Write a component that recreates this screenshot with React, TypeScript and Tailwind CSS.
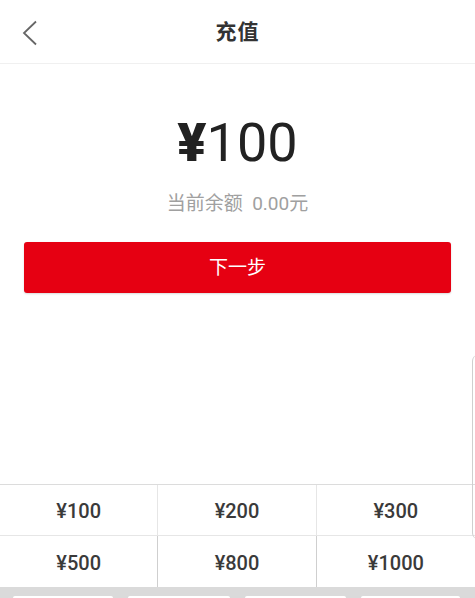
import React from 'react';

const amounts = ['¥100', '¥200', '¥300', '¥500', '¥800', '¥1000'];

export default function App() {
  return (
    <div
      className="relative w-[475px] h-[598px] bg-white overflow-hidden flex flex-col"
      style={{ fontFamily: '"Roboto", "Noto Sans CJK SC", sans-serif' }}
    >
      {/* header */}
      <div className="h-[64px] flex items-center justify-center relative border-b border-[#f0f0f0]">
        <svg
          className="absolute left-[22px] top-[20px]"
          width="16"
          height="26"
          viewBox="0 0 16 26"
          fill="none"
        >
          <path d="M14 1.5L2 13l12 11.5" stroke="#666" strokeWidth="1.8" />
        </svg>
        <span className="text-[21px] font-bold text-[#333] tracking-[1px] mt-[3px]">充值</span>
      </div>

      {/* amount */}
      <div className="flex flex-col items-center mt-[52px]">
        <div className="flex items-baseline leading-none text-[#222]">
          <span className="text-[54px] font-black">¥</span>
          <span className="text-[54px] font-normal">100</span>
        </div>
        <div className="mt-[20px] text-[19px] text-[#a0a0a0]">
          当前余额&nbsp;&nbsp;0.00元
        </div>
      </div>

      <button className="mx-[24px] mt-[23px] h-[51px] bg-[#e60012] rounded-[3px] text-white text-[19px] pt-[2px] shadow-[0_1px_2px_rgba(0,0,0,0.15)]">
        下一步
      </button>

      <div className="flex-1" />

      {/* preset amounts */}
      <div className="grid grid-cols-3 border-t border-[#dcdcdc]">
        {amounts.map((a, i) => (
          <div
            key={a}
            className={
              'h-[51px] flex items-center justify-center text-[20px] font-medium text-[#3a3a3a] pt-[2px] ' +
              (i % 3 !== 2 ? 'border-r border-[#cfcfcf] ' : '') +
              (i < 3 ? 'border-b border-[#e6e6e6]' : '')
            }
          >
            {a}
          </div>
        ))}
      </div>

      {/* keyboard edge */}
      <div className="h-[11px] bg-[#dadada] flex gap-[15px] px-[13px] pt-[9px]">
        <div className="w-[100px] bg-white rounded-t-[5px]" />
        <div className="w-[102px] bg-white rounded-t-[5px]" />
        <div className="w-[101px] bg-white rounded-t-[5px]" />
        <div className="w-[99px] bg-white rounded-t-[5px]" />
      </div>

      {/* side handle */}
      <div className="absolute left-[472px] top-[355px] w-[6px] h-[184px] border-l border-[#cfcfcf] rounded-l-[6px]" />
    </div>
  );
}
